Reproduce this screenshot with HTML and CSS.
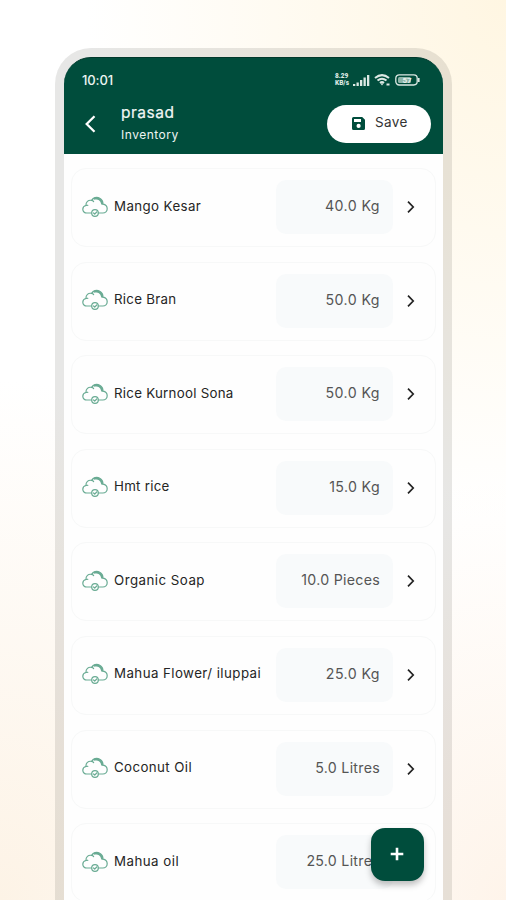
FILE: index.html
```html
<!DOCTYPE html>
<html lang="en">
<head>
<meta charset="utf-8">
<title>Inventory</title>
<link rel="stylesheet" href="styles.css">
</head>
<body>
<svg width="0" height="0" class="defs" aria-hidden="true">
<symbol id="cloud" viewBox="0 0 26 22"><g fill="none" stroke="#69ab93" stroke-width="1.2" stroke-linecap="round" stroke-linejoin="round"><path d="M9.6 17H4.8C2.5 17 .8 15.4.8 13.3c0-2 1.4-3.4 3.2-3.8C3.6 6 6.4 3.6 9.6 4.4 11.3 1.6 14.6.8 17.3 2c2.5 1.1 3.8 3.6 3.6 6.2 2.5.4 4.3 2.3 4.3 4.6 0 2.4-1.9 4.2-4.4 4.2h-4.4"/><path d="M4 9.5q.9-.4 1.8-.2M9.6 4.4q1.3.3 2 1.1"/><path d="M12.8 2.6c3.4-1 6.8 1.2 7.3 5" stroke-width="2.1"/><circle cx="13" cy="17" r="3.3"/><path d="m11.6 17 1.1 1.1 2-2.1"/></g></symbol>
<symbol id="next" viewBox="0 0 10 14"><path d="m2 1.7 5.2 5.3L2 12.3" fill="none" stroke="#222" stroke-width="1.7"/></symbol>
</svg>
<main class="phone">
<header class="header">
<div class="status"><span class="time">10:01</span>
<div class="signals"><span class="speed"><b>8.29</b><b>KB/s</b></span>
<svg width="17" height="13" viewBox="0 0 17 13" fill="#dce9e4"><path d="M0 10h2.3v2H0zM3.5 8.5h2.3V12H3.5zM7 6h2.3v6H7zM10.5 3.5h2.3V12h-2.3zM14 1h2.3v11H14z"/></svg>
<svg class="wifi" width="17" height="14" viewBox="0 0 17 14" fill="none" stroke="#dce9e4" stroke-width="2"><path d="M1 5Q8-.8 15 5M3.5 7.5Q8 4 12.5 7.5M6 10q2-1.7 4 0"/><path d="m6.5 10.5 1.5 2 1.5-2z" fill="#dce9e4" stroke="none"/><path d="M12.5 11.5h3"/></svg>
<svg width="25" height="12" viewBox="0 0 25 12"><rect x=".8" y=".8" width="21.4" height="10.2" rx="3.4" fill="none" stroke="#dce9e4" stroke-width="1.3"/><path d="M23 4h1.6v4H23z" fill="#dce9e4"/><rect x="3" y="3" width="13" height="6" rx="1.5" fill="#8db5a9"/><text x="7.5" y="9" font-family="Roboto, sans-serif" font-size="8" font-weight="700" fill="#e8f1ed">57</text></svg></div></div>
<div class="bar">
<svg class="back" width="12" height="20" viewBox="0 0 12 20"><path d="M10.5 2.3 2.7 10l7.8 7.7" fill="none" stroke="#fff" stroke-width="2.3"/></svg>
<div class="titles"><h1>prasad</h1><p>Inventory</p></div>
<button class="save"><svg width="13" height="13" viewBox="0 0 13 13"><path fill="#004d3c" fill-rule="evenodd" d="M1.5 0h8.7L13 2.8v8.7q0 1.5-1.5 1.5h-10Q0 13 0 11.5v-10Q0 0 1.5 0zM2 2v3h7V2zM6.6 6.8a2.1 2.1 0 1 0 0 4.2 2.1 2.1 0 0 0 0-4.2z"/></svg><span>Save</span></button>
</div>
</header>
<section class="list">
<article class="card"><svg class="cloud"><use href="#cloud"/></svg><span class="name mango">Mango Kesar</span><span class="qty">40.0 Kg</span><svg class="next"><use href="#next"/></svg></article>
<article class="card"><svg class="cloud"><use href="#cloud"/></svg><span class="name bran">Rice Bran</span><span class="qty">50.0 Kg</span><svg class="next"><use href="#next"/></svg></article>
<article class="card"><svg class="cloud"><use href="#cloud"/></svg><span class="name sona">Rice Kurnool Sona</span><span class="qty">50.0 Kg</span><svg class="next"><use href="#next"/></svg></article>
<article class="card"><svg class="cloud"><use href="#cloud"/></svg><span class="name hmt">Hmt rice</span><span class="qty fifteen">15.0 Kg</span><svg class="next"><use href="#next"/></svg></article>
<article class="card"><svg class="cloud"><use href="#cloud"/></svg><span class="name soap">Organic Soap</span><span class="qty pieces">10.0 Pieces</span><svg class="next"><use href="#next"/></svg></article>
<article class="card"><svg class="cloud"><use href="#cloud"/></svg><span class="name flower">Mahua Flower/ iluppai</span><span class="qty">25.0 Kg</span><svg class="next"><use href="#next"/></svg></article>
<article class="card"><svg class="cloud"><use href="#cloud"/></svg><span class="name coconut">Coconut Oil</span><span class="qty litres">5.0 Litres</span><svg class="next"><use href="#next"/></svg></article>
<article class="card"><svg class="cloud"><use href="#cloud"/></svg><span class="name oil">Mahua oil</span><span class="qty litres">25.0 Litres</span><svg class="next"><use href="#next"/></svg></article>
</section>
<button class="fab" aria-label="Add"><svg width="14" height="14" viewBox="0 0 14 14"><path d="M7 .7v12.6M.7 7h12.6" stroke="#fff" stroke-width="2.6"/></svg></button>
</main>
</body>
</html>
```
FILE: styles.css
```css
* { box-sizing: border-box; }
body {
  margin: 0;
  height: 900px;
  overflow: hidden;
  padding: 48px 54px 0 55px;
  font-family: Inter, "Open Sans", sans-serif;
  background:
    radial-gradient(ellipse 420px 520px at 100% 0, #fff6e2, rgba(255,246,226,0)),
    radial-gradient(ellipse 420px 520px at 0 100%, #fdf3e6, rgba(253,243,230,0)),
    radial-gradient(ellipse 300px 420px at 100% 100%, #fef4ea, rgba(254,244,234,0)),
    #fff;
}
.defs { position: absolute; }
.phone {
  position: relative;
  height: 852px;
  border: 9px solid rgba(20,25,10,.1);
  border-bottom: 0;
  border-radius: 36px 36px 0 0;
  background: #fefefe;
  background-clip: padding-box;
}
.header {
  height: 97px;
  padding: 13px 12px 0 18px;
  background: #004d3c;
  border-top: 1px solid #00382b;
  border-radius: 27px 27px 0 0;
  color: #eef5f2;
}
.status { display: flex; justify-content: space-between; height: 18px; padding-right: 11px; }
.time { font: 500 13px/18px Inter, sans-serif; letter-spacing: -.1px; }
.signals { display: flex; align-items: center; gap: 3px; }
.speed { font: 700 6.5px/7px Roboto, sans-serif; width: 15px; display: flex; flex-direction: column; color: #dce9e4; }
.wifi { margin: 0 1px; }
.bar { display: flex; align-items: flex-start; }
.back { margin: 25px 0 0 2px; }
.titles { margin-left: 25px; padding-top: 12px; flex: 1; }
h1, p { margin: 0; font-weight: 400; }
h1 { font-size: 15.5px; line-height: 23px; letter-spacing: .5px; -webkit-text-stroke: .2px #fff; }
p { font-size: 12px; line-height: 21px; letter-spacing: .5px; }
.save {
  display: flex;
  align-items: center;
  gap: 10px;
  width: 104px;
  height: 38px;
  margin-top: 16px;
  padding: 0 0 0 25px;
  border: 0;
  border-radius: 19px;
  background: #fff;
  color: #333;
  font: 400 13.5px/18px Inter, sans-serif;
  letter-spacing: .4px;
}
.save svg { margin-bottom: 1px; }
.save span { padding-bottom: 4px; }
.list { display: flex; flex-direction: column; gap: 14.6px; padding: 14px 7px 0; height: 746px; overflow: hidden; }
.card {
  display: flex;
  align-items: center;
  flex: 0 0 79px;
  border: 1px solid #f7f8f8;
  border-radius: 15px;
  padding: 0 19px 1px 11px;
}
.cloud { width: 26px; height: 22px; margin: 0 1px 1px -1px; }
.name { flex: 1; margin-left: 5px; padding-bottom: 3px; font-size: 13.3px; line-height: 20px; color: #252525; white-space: nowrap; }
.mango, .coconut { letter-spacing: .4px; }
.bran, .sona, .hmt { letter-spacing: .27px; }
.soap, .oil { letter-spacing: .48px; }
.flower { letter-spacing: .43px; }
.qty { width: 117px; height: 54px; padding-right: 13px; border-radius: 10px; background: #f8fafb; color: #555; font-size: 14.2px; line-height: 51px; letter-spacing: .42px; text-align: right; white-space: nowrap; }
.fifteen { letter-spacing: .35px; }
.pieces, .litres { letter-spacing: .28px; }
.next { width: 10px; height: 14px; margin-left: 13px; }
.fab {
  position: absolute;
  left: 307px;
  top: 771px;
  width: 53px;
  height: 53px;
  display: grid;
  place-items: center;
  padding: 0 1px 1px 0;
  border: 0;
  border-radius: 14px;
  background: #004d3c;
  box-shadow: 0 4px 6px rgba(0,0,0,.25);
}
```
